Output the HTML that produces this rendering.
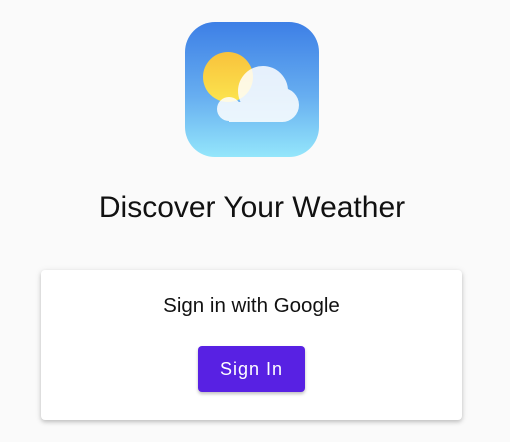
<!DOCTYPE html>
<html><head><style>
html,body{margin:0;padding:0;background:#fafafa;width:510px;height:442px;overflow:hidden;font-family:"Liberation Sans",Roboto,sans-serif}
.icon{position:absolute;left:185px;top:22px;width:134px;height:135px;border-radius:30px;background:linear-gradient(#3d7fe6,#67aef0 55%,#94e6fb);overflow:hidden}
h1{position:absolute;left:0;width:504px;top:191px;margin:0;text-align:center;font-weight:400;font-size:30px;color:#111}
.card{position:absolute;left:41px;top:270px;width:421px;height:150px;background:#fff;border-radius:4px;box-shadow:0 2px 4px rgba(0,0,0,.2),0 1px 8px rgba(0,0,0,.08)}
.t{position:absolute;left:0;width:100%;top:24px;text-align:center;font-size:20.5px;color:#111}
.btn{position:absolute;left:157px;top:76px;width:107px;height:46px;background:#5821e3;border-radius:4px;color:#fff;font-size:18px;letter-spacing:1px;text-align:center;line-height:46px;box-shadow:0 2px 3px rgba(0,0,0,.25)}
</style></head><body>
<div class="icon"><svg width="134" height="135" viewBox="0 0 134 135">
<defs><linearGradient id="s" x1="0" y1="0" x2="0" y2="1"><stop offset="0" stop-color="#f8c23c"/><stop offset="1" stop-color="#fce44e"/></linearGradient></defs>
<circle cx="43" cy="55" r="25" fill="url(#s)"/>
<g fill="#fff" opacity=".85">
<circle cx="78" cy="69" r="25"/>
<circle cx="97" cy="83" r="17"/>
<circle cx="44" cy="87" r="12"/>
<rect x="44" y="80" width="54" height="20"/>
</g>
</svg></div>
<h1>Discover Your Weather</h1>
<div class="card"><div class="t">Sign in with Google</div><div class="btn">Sign In</div></div>
</body></html>
